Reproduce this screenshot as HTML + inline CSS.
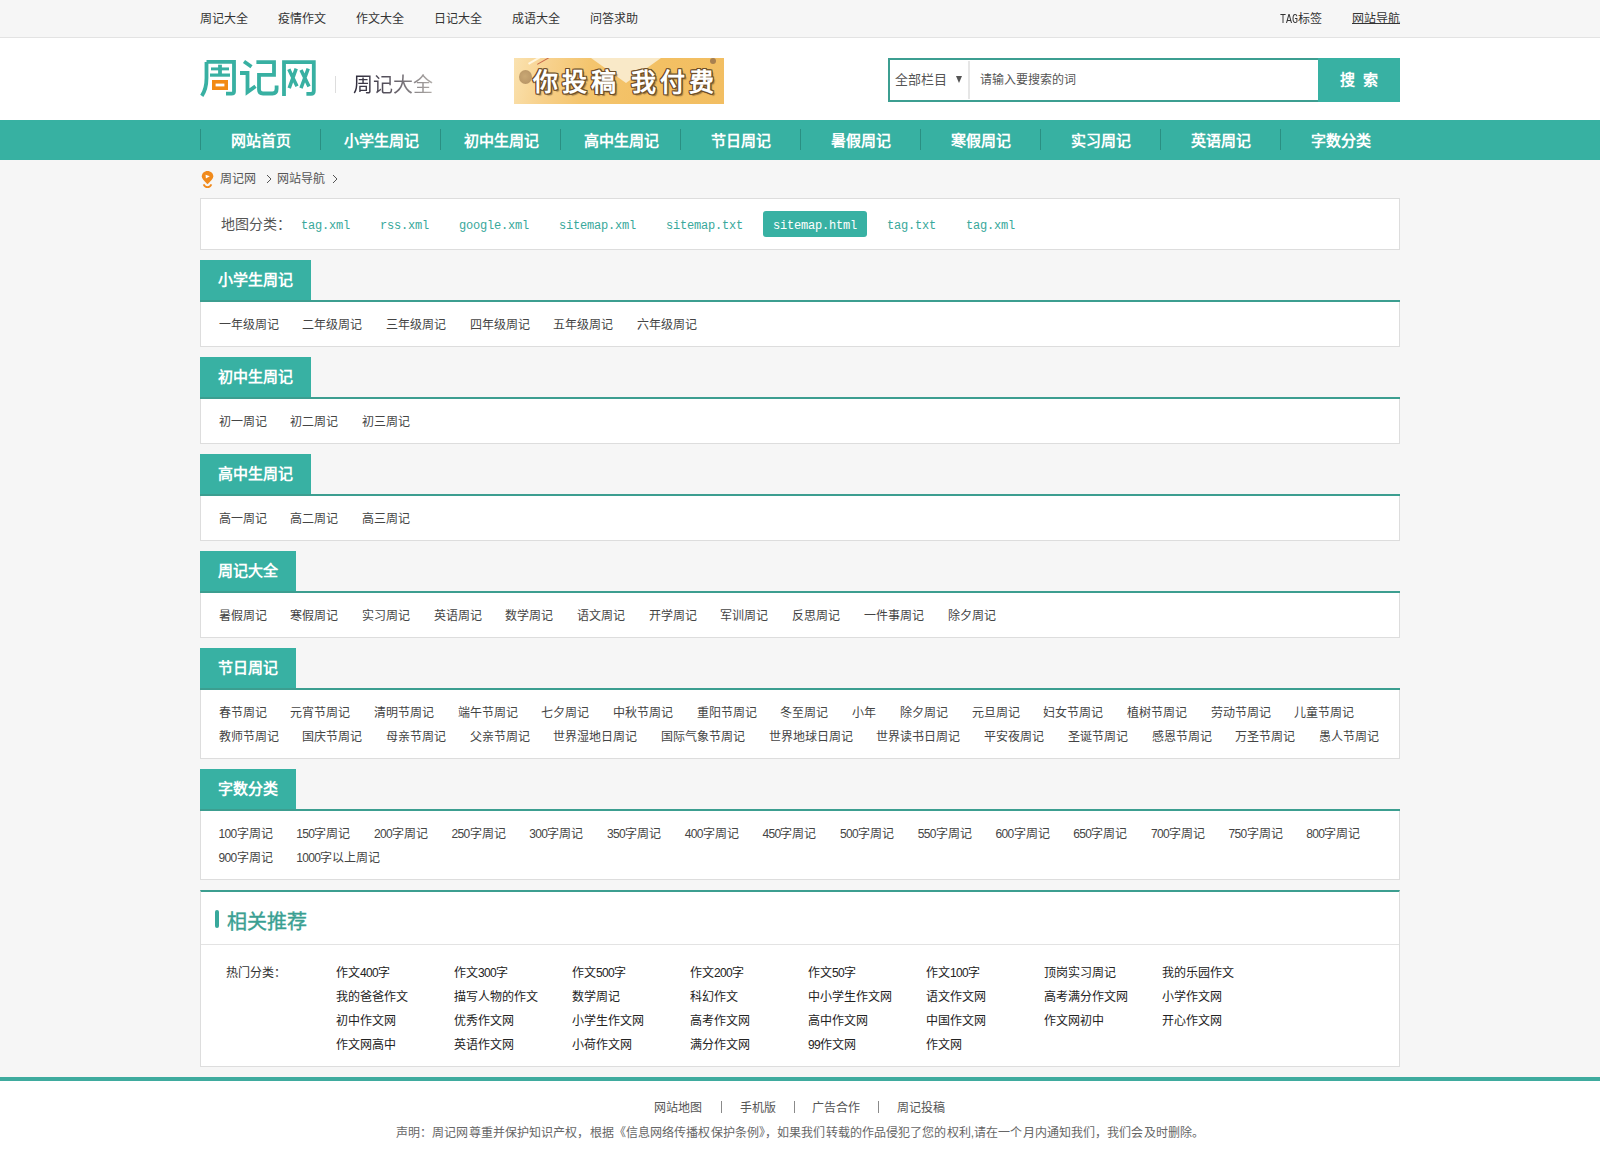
<!DOCTYPE html>
<html lang="zh-CN">
<head>
<meta charset="utf-8">
<title>网站导航 - 周记网</title>
<style>
*{margin:0;padding:0;box-sizing:border-box}
html,body{width:1600px;height:1157px;overflow:hidden}
body{background:#f6f6f6;font-family:"Liberation Sans",sans-serif;font-size:12px;color:#444;position:relative}
a{color:inherit;text-decoration:none}
.abs{position:absolute}
.n{letter-spacing:-0.67px}
/* top bar */
#top{position:absolute;left:0;top:0;width:1600px;height:38px;background:#f6f6f6;border-bottom:1px solid #e3e3e3}
#top a{position:absolute;top:1px;line-height:37px;color:#333;white-space:nowrap}
#top .tg{display:inline-block;font-family:"Liberation Mono",monospace;font-size:12px;transform:scaleX(0.833);transform-origin:0 50%;margin-right:-3.6px}
/* header */
#hd{position:absolute;left:0;top:38px;width:1600px;height:82px;background:#fff}
#logo{position:absolute;left:196px;top:16px}
#sep{position:absolute;left:335px;top:38px;width:1px;height:17px;background:#ddd}
#slogan{position:absolute;left:353px;top:36px;font-family:"Liberation Serif",serif;font-size:20px;line-height:22px;white-space:nowrap;background:linear-gradient(90deg,#2d2a3a 0%,#5a5560 45%,#b0aca8 100%);-webkit-background-clip:text;background-clip:text;color:transparent}
#banner{position:absolute;left:514px;top:20px;width:210px;height:46px;background:linear-gradient(105deg,#fae2b0 0%,#f7d08a 18%,#f4c56e 35%,#f3c063 65%,#f2be62 100%);overflow:hidden}
#banner .tri{position:absolute;left:77px;top:0;width:0;height:0;border-left:35px solid transparent;border-right:35px solid transparent;border-top:25px solid #f9e9c8}
#banner .l1{position:absolute;left:14px;top:5px;width:22px;height:1.5px;background:#fff6e0;transform:rotate(-30deg);transform-origin:0 0}
#banner .l2{position:absolute;left:23px;top:6px;width:15px;height:1px;background:#c8684a;transform:rotate(-30deg);transform-origin:0 0}
#banner .c1{position:absolute;left:4.5px;top:11.5px;width:13px;height:14px;border-radius:50%;background:radial-gradient(circle at 45% 45%,#c9a874,#b39062)}
#banner .c2{position:absolute;left:196px;top:0px;width:6px;height:6px;border-radius:50%;background:#a88050}
#banner .txt{position:absolute;left:19px;top:9px;font-size:25px;line-height:30px;font-weight:bold;color:#fff;letter-spacing:4px;white-space:nowrap;text-shadow:1px 0 0 #6e4e28,-1px 0 0 #6e4e28,0 1px 0 #6e4e28,0 -1px 0 #6e4e28,1px 1px 0 #6e4e28,-1px -1px 0 #6e4e28,1px -1px 0 #6e4e28,-1px 1px 0 #6e4e28,2px 2px 1px rgba(110,78,40,.6)}
#search{position:absolute;left:888px;top:20px;width:512px;height:44px;border:2px solid #3c9e91;background:#fff}
#search .sel{position:absolute;left:5px;top:0;line-height:40px;font-size:13px;color:#555;white-space:nowrap}
#search .arr{position:absolute;left:66px;top:16px;width:0;height:0;border-left:3.5px solid transparent;border-right:3.5px solid transparent;border-top:7px solid #555}
#search .dv{position:absolute;left:78px;top:1px;width:2px;height:38px;background:#e6e6e6}
#search .ph{position:absolute;left:90px;top:0;line-height:40px;font-size:12px;color:#555;white-space:nowrap}
#search .btn{position:absolute;left:428px;top:-2px;width:82px;height:44px;background:#38b1a3;color:#fff;font-size:15px;font-weight:bold;line-height:44px;text-align:center;white-space:nowrap}
/* nav */
#nav{position:absolute;left:0;top:120px;width:1600px;height:40px;background:#37b1a2}
#nav a{position:absolute;top:0;width:120px;height:40px;line-height:42px;padding-left:2px;text-align:center;color:#fff;font-size:15px;font-weight:bold;white-space:nowrap}
#nav a:before{content:"";position:absolute;left:0;top:9px;width:1px;height:21px;background:#2a8f82}
/* breadcrumb */
#crumb{position:absolute;left:200px;top:161px;height:38px;line-height:37px;color:#555;white-space:nowrap}
/* sitemap box */
.box{position:absolute;left:200px;width:1200px;background:#fff;border:1px solid #ddd}
#maps{top:198px;height:52px;padding-left:20px}
#maps .lb{position:absolute;left:20px;top:0;line-height:50px;font-size:14px;color:#555}
#maps a{position:absolute;top:12px;height:26px;line-height:26px;padding:0 10px;font-family:"Liberation Mono",monospace;font-size:12px;letter-spacing:-0.2px;color:#38a89b;border-radius:3px;white-space:nowrap}
#maps a.on{background:#38b1a3;color:#fff}
/* section */
.sec{position:absolute;left:200px;width:1200px}
.sec .tab{position:absolute;left:0;top:0;height:40px;line-height:40px;padding:0 18px;background:#38b1a3;color:#fff;font-size:15px;font-weight:bold;white-space:nowrap}
.sec .ln{position:absolute;left:0;top:40px;width:1200px;height:2px;background:#3c9e90}
.sec .ct{position:absolute;left:0;top:42px;width:1200px;background:#fff;border:1px solid #ddd;border-top:0;padding:10px 0 10px 17.5px;line-height:24px;white-space:nowrap}
.sec .ct div{height:24px;position:relative}
.sec .ct a{position:absolute;top:1px;color:#444}
/* related */
#rel{top:890px;height:177px;border-top:2px solid #3c9e90}
#rel .hd{position:absolute;left:0;top:0;width:1198px;height:53px;border-bottom:1px solid #e3e3e3}
#rel .bar{position:absolute;left:14px;top:18px;width:4px;height:18px;background:#38a89b;border-radius:2px}
#rel .tt{position:absolute;left:26px;top:17px;font-family:"Liberation Serif",serif;font-size:20px;line-height:26px;font-weight:500;color:#3a9f92;-webkit-text-stroke:0.4px #3a9f92;white-space:nowrap}
#rel .lb{position:absolute;left:25px;top:69px;line-height:24px;color:#333;white-space:nowrap}
#rel a{position:absolute;line-height:24px;color:#222;white-space:nowrap;margin-top:1px}
/* footer */
#ft{position:absolute;left:0;top:1077px;width:1600px;height:80px;background:#fff;border-top:4px solid #3fab9e}
#ft .links a{position:absolute;top:16px;line-height:22px;color:#555;white-space:nowrap}
#ft .links i{position:absolute;top:20px;width:1px;height:12px;background:#8a8a8a}
#ft .st{position:absolute;left:0;top:41px;letter-spacing:0.1px;width:1600px;text-align:center;line-height:22px;color:#666;white-space:nowrap}
</style>
</head>
<body>
<div id="top">
  <a style="left:200px">周记大全</a>
  <a style="left:278px">疫情作文</a>
  <a style="left:356px">作文大全</a>
  <a style="left:434px">日记大全</a>
  <a style="left:512px">成语大全</a>
  <a style="left:590px">问答求助</a>
  <a style="left:1280px"><span class="tg">TAG</span>标签</a>
  <a style="left:1352px">网站导航</a><div style="position:absolute;left:1352px;top:23px;width:48px;height:1px;background:#333"></div>
</div>
<div id="hd">
  <svg id="logo" width="130" height="46" viewBox="196 54 130 46"><g fill="none" stroke="#38b0a2" stroke-width="3.8" stroke-linecap="butt" stroke-linejoin="miter">
<path d="M206.5 62V78Q206.5 89 201.8 95.8"/><path d="M206.5 61.8H234V91.5Q234 93.6 231.5 93.6H226"/>
<path d="M211 68.9H229" stroke-width="2.9"/><path d="M220 64.7V74.7" stroke-width="3.8"/><path d="M210 75.1H230" stroke-width="3.2"/>
<rect x="213.8" y="81.8" width="12.4" height="6.4" stroke="#f28a12" stroke-width="3.6"/>
<path d="M244 61.6L251.5 66.8" stroke-width="3.7"/><path d="M240 73H247.5V92L255.5 86.3"/>
<path d="M256.4 62.1H274V74.8H259V89.5Q259 93.5 263 93.5H272.5Q276.6 93.5 276.6 89V85.5"/>
<path d="M284 96V62.1H313.8V91Q313.8 93.8 311 93.8H306.4"/>
<path d="M288.8 69.3L297 86.3M296.2 68.6L289.2 88.2M301 70L309 86.6M308.2 68.6L301 88.2" stroke-width="3.5"/>
</g></svg>
  <div id="sep"></div>
  <div id="slogan">周记大全</div>
  <div id="banner"><div class="tri"></div><div class="l1"></div><div class="l2"></div><div class="c1"></div><div class="c2"></div><div class="txt">你投稿<span style="display:inline-block;width:11px"></span>我付费</div></div>
  <div id="search">
    <div class="sel">全部栏目</div><div class="arr"></div>
    <div class="dv"></div>
    <div class="ph">请输入要搜索的词</div>
    <div class="btn">搜<span style="display:inline-block;width:8px"></span>索</div>
  </div>
</div>
<div id="nav">
  <a style="left:200px">网站首页</a>
  <a style="left:320px">小学生周记</a>
  <a style="left:440px">初中生周记</a>
  <a style="left:560px">高中生周记</a>
  <a style="left:680px">节日周记</a>
  <a style="left:800px">暑假周记</a>
  <a style="left:920px">寒假周记</a>
  <a style="left:1040px">实习周记</a>
  <a style="left:1160px">英语周记</a>
  <a style="left:1280px">字数分类</a>
</div>
<div id="crumb"><svg class="abs" style="left:0;top:0" width="150" height="38" viewBox="200 161 150 38"><path d="M207.5 171C204.3 171 201.8 173.3 201.8 176.3C201.8 178.6 203.8 180.8 207.5 184.2C211.2 180.8 213.3 178.6 213.3 176.3C213.3 173.3 210.7 171 207.5 171Z" fill="#f08a1c"/><path d="M205.6 174.8L209.8 176.3L205.9 178.4Z" fill="#fff"/><path d="M203.6 184.3Q205 187.2 207.5 187.2Q210 187.2 211.4 184.3" fill="none" stroke="#f08a1c" stroke-width="1.8"/><path d="M267 175L271 179L267 183M333 175L337 179L333 183" fill="none" stroke="#555" stroke-width="1"/></svg><span class="abs" style="left:20px">周记网</span><span class="abs" style="left:77px">网站导航</span></div>
<div class="box" id="maps"><span class="lb">地图分类：</span><a class="" style="left:90px"><span style="position:relative;top:1.5px">tag.xml</span></a><a class="" style="left:169px"><span style="position:relative;top:1.5px">rss.xml</span></a><a class="" style="left:248px"><span style="position:relative;top:1.5px">google.xml</span></a><a class="" style="left:348px"><span style="position:relative;top:1.5px">sitemap.xml</span></a><a class="" style="left:455px"><span style="position:relative;top:1.5px">sitemap.txt</span></a><a class="on" style="left:562px"><span style="position:relative;top:1.5px">sitemap.html</span></a><a class="" style="left:676px"><span style="position:relative;top:1.5px">tag.txt</span></a><a class="" style="left:755px"><span style="position:relative;top:1.5px">tag.xml</span></a></div>
<div class="sec" style="top:260px"><div class="tab">小学生周记</div><div class="ln"></div><div class="ct" style="height:45px"><div><a style="left:0.00px">一年级周记</a><a style="left:83.70px">二年级周记</a><a style="left:167.40px">三年级周记</a><a style="left:251.10px">四年级周记</a><a style="left:334.80px">五年级周记</a><a style="left:418.50px">六年级周记</a></div></div></div>
<div class="sec" style="top:357px"><div class="tab">初中生周记</div><div class="ln"></div><div class="ct" style="height:45px"><div><a style="left:0.00px">初一周记</a><a style="left:71.70px">初二周记</a><a style="left:143.40px">初三周记</a></div></div></div>
<div class="sec" style="top:454px"><div class="tab">高中生周记</div><div class="ln"></div><div class="ct" style="height:45px"><div><a style="left:0.00px">高一周记</a><a style="left:71.70px">高二周记</a><a style="left:143.40px">高三周记</a></div></div></div>
<div class="sec" style="top:551px"><div class="tab">周记大全</div><div class="ln"></div><div class="ct" style="height:45px"><div><a style="left:0.00px">暑假周记</a><a style="left:71.70px">寒假周记</a><a style="left:143.40px">实习周记</a><a style="left:215.10px">英语周记</a><a style="left:286.80px">数学周记</a><a style="left:358.50px">语文周记</a><a style="left:430.20px">开学周记</a><a style="left:501.90px">军训周记</a><a style="left:573.60px">反思周记</a><a style="left:645.30px">一件事周记</a><a style="left:729.00px">除夕周记</a></div></div></div>
<div class="sec" style="top:648px"><div class="tab">节日周记</div><div class="ln"></div><div class="ct" style="height:69px"><div><a style="left:0.00px">春节周记</a><a style="left:71.70px">元宵节周记</a><a style="left:155.40px">清明节周记</a><a style="left:239.10px">端午节周记</a><a style="left:322.80px">七夕周记</a><a style="left:394.50px">中秋节周记</a><a style="left:478.20px">重阳节周记</a><a style="left:561.90px">冬至周记</a><a style="left:633.60px">小年</a><a style="left:681.30px">除夕周记</a><a style="left:753.00px">元旦周记</a><a style="left:824.70px">妇女节周记</a><a style="left:908.40px">植树节周记</a><a style="left:992.10px">劳动节周记</a><a style="left:1075.80px">儿童节周记</a></div><div><a style="left:0.00px">教师节周记</a><a style="left:83.70px">国庆节周记</a><a style="left:167.40px">母亲节周记</a><a style="left:251.10px">父亲节周记</a><a style="left:334.80px">世界湿地日周记</a><a style="left:442.50px">国际气象节周记</a><a style="left:550.20px">世界地球日周记</a><a style="left:657.90px">世界读书日周记</a><a style="left:765.60px">平安夜周记</a><a style="left:849.30px">圣诞节周记</a><a style="left:933.00px">感恩节周记</a><a style="left:1016.70px">万圣节周记</a><a style="left:1100.40px">愚人节周记</a></div></div></div>
<div class="sec" style="top:769px"><div class="tab">字数分类</div><div class="ln"></div><div class="ct" style="height:69px"><div><a style="left:0.00px"><span class="n">100</span>字周记</a><a style="left:77.70px"><span class="n">150</span>字周记</a><a style="left:155.40px"><span class="n">200</span>字周记</a><a style="left:233.10px"><span class="n">250</span>字周记</a><a style="left:310.80px"><span class="n">300</span>字周记</a><a style="left:388.50px"><span class="n">350</span>字周记</a><a style="left:466.20px"><span class="n">400</span>字周记</a><a style="left:543.90px"><span class="n">450</span>字周记</a><a style="left:621.60px"><span class="n">500</span>字周记</a><a style="left:699.30px"><span class="n">550</span>字周记</a><a style="left:777.00px"><span class="n">600</span>字周记</a><a style="left:854.70px"><span class="n">650</span>字周记</a><a style="left:932.40px"><span class="n">700</span>字周记</a><a style="left:1010.10px"><span class="n">750</span>字周记</a><a style="left:1087.80px"><span class="n">800</span>字周记</a></div><div><a style="left:0.00px"><span class="n">900</span>字周记</a><a style="left:77.70px"><span class="n">1000</span>字以上周记</a></div></div></div>
<div class="box" id="rel"><div class="hd"><div class="bar"></div><div class="tt">相关推荐</div></div><div class="lb">热门分类：</div><a style="left:135px;top:68px">作文<span class="n">400</span>字</a><a style="left:253px;top:68px">作文<span class="n">300</span>字</a><a style="left:371px;top:68px">作文<span class="n">500</span>字</a><a style="left:489px;top:68px">作文<span class="n">200</span>字</a><a style="left:607px;top:68px">作文<span class="n">50</span>字</a><a style="left:725px;top:68px">作文<span class="n">100</span>字</a><a style="left:843px;top:68px">顶岗实习周记</a><a style="left:961px;top:68px">我的乐园作文</a><a style="left:135px;top:92px">我的爸爸作文</a><a style="left:253px;top:92px">描写人物的作文</a><a style="left:371px;top:92px">数学周记</a><a style="left:489px;top:92px">科幻作文</a><a style="left:607px;top:92px">中小学生作文网</a><a style="left:725px;top:92px">语文作文网</a><a style="left:843px;top:92px">高考满分作文网</a><a style="left:961px;top:92px">小学作文网</a><a style="left:135px;top:116px">初中作文网</a><a style="left:253px;top:116px">优秀作文网</a><a style="left:371px;top:116px">小学生作文网</a><a style="left:489px;top:116px">高考作文网</a><a style="left:607px;top:116px">高中作文网</a><a style="left:725px;top:116px">中国作文网</a><a style="left:843px;top:116px">作文网初中</a><a style="left:961px;top:116px">开心作文网</a><a style="left:135px;top:140px">作文网高中</a><a style="left:253px;top:140px">英语作文网</a><a style="left:371px;top:140px">小荷作文网</a><a style="left:489px;top:140px">满分作文网</a><a style="left:607px;top:140px"><span class="n">99</span>作文网</a><a style="left:725px;top:140px">作文网</a></div>
<div id="ft">
  <div class="links"><a style="left:654px">网站地图</a><i style="left:721px"></i><a style="left:740px">手机版</a><i style="left:794px"></i><a style="left:812px">广告合作</a><i style="left:878px"></i><a style="left:897px">周记投稿</a></div>
  <div class="st">声明：周记网尊重并保护知识产权，根据《信息网络传播权保护条例》，如果我们转载的作品侵犯了您的权利,请在一个月内通知我们，我们会及时删除。</div>
</div>
</body>
</html>
